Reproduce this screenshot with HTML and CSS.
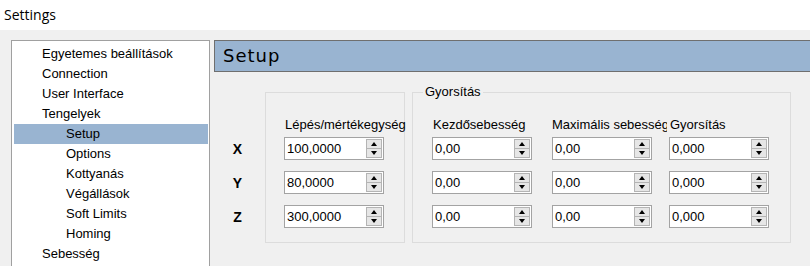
FILE: index.html
```html
<!DOCTYPE html>
<html lang="hu">
<head>
  <meta charset="UTF-8">
  <meta name="viewport" content="width=device-width, initial-scale=1.0">
  <title>Settings</title>
  <link rel="stylesheet" href="styles.css">
</head>
<body>
  <div class="titlebar">Settings</div>

  <div class="window">
    <ul class="tree">
      <li>Egyetemes beállítások</li>
      <li>Connection</li>
      <li>User Interface</li>
      <li>Tengelyek
        <ul>
          <li class="selected">Setup</li>
          <li>Options</li>
          <li>Kottyanás</li>
          <li>Végállások</li>
          <li>Soft Limits</li>
          <li>Homing</li>
        </ul>
      </li>
      <li>Sebesség</li>
    </ul>

    <div class="page">
      <div class="page-header">Setup</div>

      <div class="page-body">
        <div class="axes">
          <span>X</span>
          <span>Y</span>
          <span>Z</span>
        </div>

        <div class="group group-steps">
          <div class="column">
            <div class="col-label">Lépés/mértékegység</div>
            <div class="spin"><span class="value">100,0000</span><span class="spin-btns"><i class="up"></i><i class="down"></i></span></div>
            <div class="spin"><span class="value">80,0000</span><span class="spin-btns"><i class="up"></i><i class="down"></i></span></div>
            <div class="spin"><span class="value">300,0000</span><span class="spin-btns"><i class="up"></i><i class="down"></i></span></div>
          </div>
        </div>

        <div class="group group-accel">
          <span class="legend">Gyorsítás</span>
          <div class="column">
            <div class="col-label">Kezdősebesség</div>
            <div class="spin"><span class="value">0,00</span><span class="spin-btns"><i class="up"></i><i class="down"></i></span></div>
            <div class="spin"><span class="value">0,00</span><span class="spin-btns"><i class="up"></i><i class="down"></i></span></div>
            <div class="spin"><span class="value">0,00</span><span class="spin-btns"><i class="up"></i><i class="down"></i></span></div>
          </div>
          <div class="column">
            <div class="col-label narrow">Maximális sebesség</div>
            <div class="spin"><span class="value">0,00</span><span class="spin-btns"><i class="up"></i><i class="down"></i></span></div>
            <div class="spin"><span class="value">0,00</span><span class="spin-btns"><i class="up"></i><i class="down"></i></span></div>
            <div class="spin"><span class="value">0,00</span><span class="spin-btns"><i class="up"></i><i class="down"></i></span></div>
          </div>
          <div class="column">
            <div class="col-label">Gyorsítás</div>
            <div class="spin"><span class="value">0,000</span><span class="spin-btns"><i class="up"></i><i class="down"></i></span></div>
            <div class="spin"><span class="value">0,000</span><span class="spin-btns"><i class="up"></i><i class="down"></i></span></div>
            <div class="spin"><span class="value">0,000</span><span class="spin-btns"><i class="up"></i><i class="down"></i></span></div>
          </div>
        </div>
      </div>
    </div>
  </div>
</body>
</html>
```

FILE: styles.css
```css
body {
  margin: 0;
  padding: 0;
  height: 266px;
  overflow: hidden;
  background-color: #f0f0f0;
  font-family: "Liberation Sans", Arial, sans-serif;
  font-size: 13px;
  color: #000;
}

.titlebar {
  height: 30px;
  line-height: 30px;
  padding-left: 4px;
  background-color: #fff;
  font-family: "Open Sans", sans-serif;
  font-size: 14px;
}

.window {
  display: flex;
  height: 236px;
  box-sizing: border-box;
  padding: 10px 0 0 11px;
  overflow: hidden;
}

/* tree on the left */
.tree,
.tree ul {
  list-style: none;
  margin: 0;
  padding: 0;
}

.tree {
  width: 199px;
  height: 240px;
  box-sizing: border-box;
  flex-shrink: 0;
  padding: 3px 1px 0 2px;
  background-color: #fff;
  border: 1px solid #a0a0a0;
  margin-right: 4px;
}

.tree li {
  line-height: 20px;
  padding-left: 28px;
  white-space: nowrap;
}

.tree ul {
  margin-left: -28px;
}

.tree ul li {
  padding-left: 52px;
}

.tree li.selected {
  background-color: #99b4d1;
}

/* right page */
.page {
  flex: 1;
  margin-right: -10px;
}

.page-header {
  height: 32px;
  box-sizing: border-box;
  line-height: 30px;
  padding-left: 8px;
  background-color: #99b4d1;
  border: 1px solid #6f6f6f;
  font-family: "DejaVu Sans", sans-serif;
  font-size: 18px;
  letter-spacing: 1px;
}

.page-body {
  display: flex;
  margin-top: 20px;
}

.axes {
  width: 47px;
  margin-right: 4px;
  padding-top: 45px;
  display: grid;
  grid-template-rows: repeat(3, 23px);
  row-gap: 11px;
  align-content: start;
  align-items: center;
  justify-items: center;
  font-weight: bold;
  font-size: 14px;
}

.group {
  position: relative;
  height: 151px;
  box-sizing: border-box;
  border: 1px solid #dcdcdc;
  padding-top: 24px;
  display: flex;
}

.group-steps {
  width: 140px;
  padding-left: 18px;
}

.group-accel {
  width: 379px;
  margin-left: 7px;
  padding-left: 19px;
  display: grid;
  grid-template-columns: 120px 117px 100px;
  align-content: start;
}

.legend {
  position: absolute;
  top: -9px;
  left: 10px;
  padding: 0 2px;
  line-height: 16px;
  background-color: #f0f0f0;
}

.column {
  display: flex;
  flex-direction: column;
  row-gap: 11px;
  width: 100px;
}

.col-label {
  height: 16px;
  line-height: 16px;
  width: 122px;
  padding-left: 1px;
  margin-bottom: -7px;
  white-space: nowrap;
  overflow: hidden;
}

.col-label.narrow {
  width: 115px;
  padding-left: 0;
}

/* numeric up/down */
.spin {
  display: flex;
  align-items: center;
  height: 23px;
  box-sizing: border-box;
  background-color: #fff;
  border: 1px solid #a3a3a3;
}

.spin .value {
  flex: 1;
  padding-left: 2px;
}

.spin-btns {
  display: flex;
  flex-direction: column;
  width: 16px;
  height: 19px;
  margin-right: 1px;
  box-sizing: border-box;
  border: 1px solid #b4b4b4;
  background-color: #e6e6e6;
}

.spin-btns i {
  flex: 1;
  display: flex;
  align-items: center;
  justify-content: center;
}

.spin-btns i.down {
  border-top: 1px solid #b4b4b4;
}

.spin-btns i::after {
  content: "";
  width: 0;
  height: 0;
  border-left: 3.5px solid transparent;
  border-right: 3.5px solid transparent;
}

.spin-btns i.up::after {
  border-bottom: 4px solid #000;
}

.spin-btns i.down::after {
  border-top: 4px solid #000;
}
```
